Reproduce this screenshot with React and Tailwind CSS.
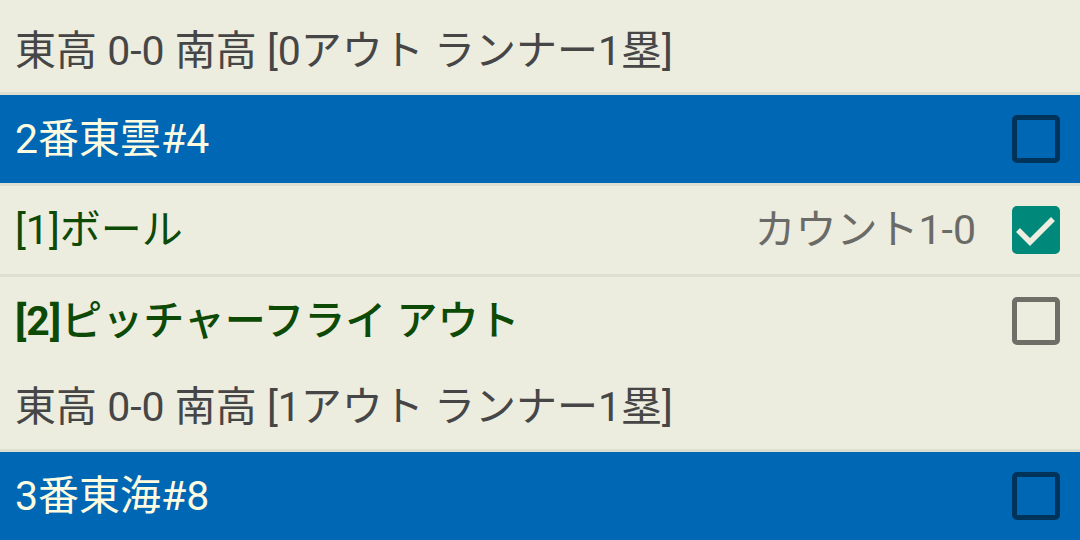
import React from "react";

const font = { fontFamily: "Roboto, 'Noto Sans CJK JP', sans-serif" };

function Box({ variant }) {
  if (variant === "checked") {
    return (
      <div className="w-[48px] h-[48px] rounded-[5px] bg-[#00897a] shrink-0">
        <svg width="48" height="48" viewBox="0 0 48 48">
          <path d="M6 24 L18 36 L41 13" fill="none" stroke="#eeeee0" strokeWidth="5.5" />
        </svg>
      </div>
    );
  }
  if (variant === "blue") {
    return <div className="w-[48px] h-[48px] rounded-[5px] border-[5px] border-[#00335a] shrink-0" />;
  }
  return <div className="w-[48px] h-[48px] rounded-[5px] border-[5px] border-[#6f6f67] shrink-0" />;
}

function Sep() {
  return <div className="h-[3px] bg-[#dddfd0]" />;
}

export default function App() {
  return (
    <div className="w-[1080px] h-[540px] overflow-hidden bg-[#ececdf] text-[41px] leading-none" style={font}>
      <div className="h-[92px] flex items-center pl-[15px] pt-[10px] text-[#464646]">
        東高 0-0 南高 [0アウト ランナー1塁]
      </div>
      <Sep />
      <div className="h-[88px] bg-[#0067b4] flex items-center justify-between pl-[15px] pr-[20px] text-[#fdfbe0]">
        <span>2番東雲#4</span>
        <Box variant="blue" />
      </div>
      <Sep />
      <div className="h-[88px] flex items-center pl-[15px] pr-[20px]">
        <span className="flex-1 text-[#0c4a05]">[1]ボール</span>
        <span className="text-[#6a6a66] mr-[36px]">カウント1-0</span>
        <Box variant="checked" />
      </div>
      <Sep />
      <div className="h-[88px] flex items-center justify-between pl-[15px] pr-[20px] text-[#0c4a05]">
        <span><b className="font-bold">[2]</b><span className="font-medium">ピッチャーフライ アウト</span></span>
        <Box variant="gray" />
      </div>
      <div className="h-[84px] flex items-center pl-[15px] text-[#464646]">
        東高 0-0 南高 [1アウト ランナー1塁]
      </div>
      <Sep />
      <div className="h-[88px] bg-[#0067b4] flex items-center justify-between pl-[15px] pr-[20px] text-[#fdfbe0]">
        <span>3番東海#8</span>
        <Box variant="blue" />
      </div>
    </div>
  );
}
